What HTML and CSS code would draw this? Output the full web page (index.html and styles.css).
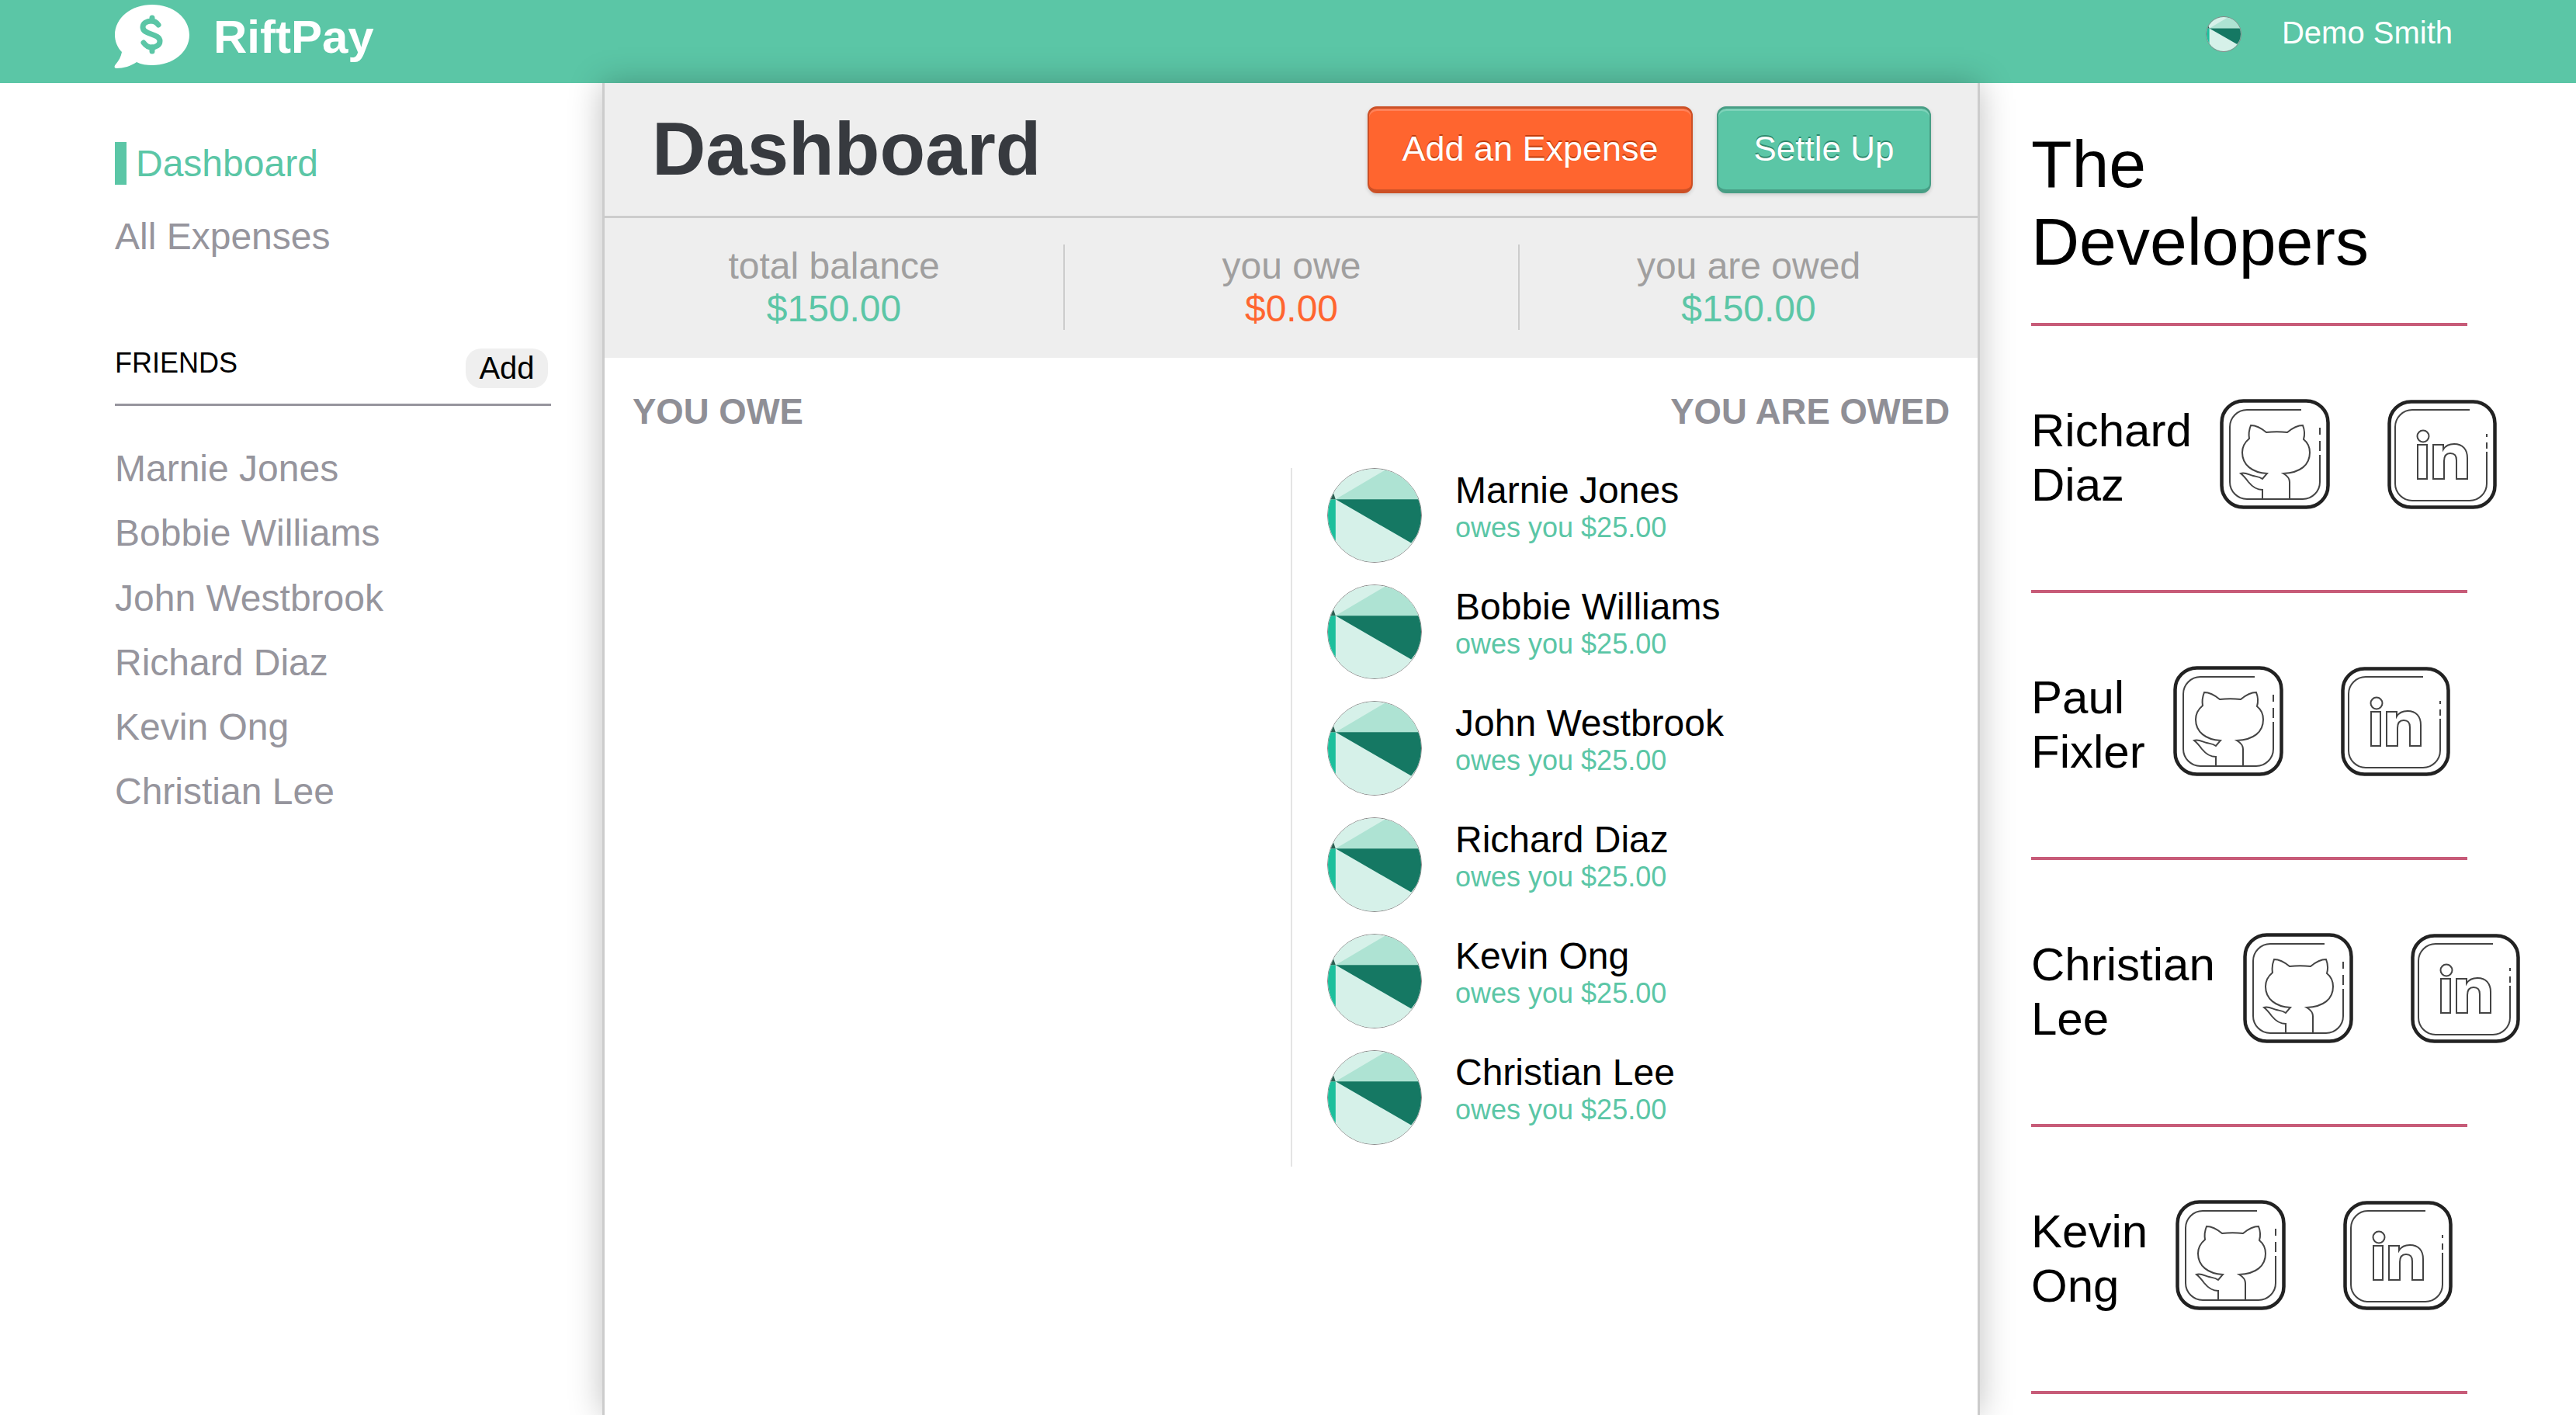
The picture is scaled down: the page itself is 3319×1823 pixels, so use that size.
FILE: index.html
```html
<!DOCTYPE html>
<html lang="en">
<head>
    <meta charset="UTF-8">
    <title>RiftPay</title>
    <link rel="stylesheet" href="styles.css">
</head>
<body>
    <svg class="defs" xmlns="http://www.w3.org/2000/svg">
        <symbol id="avatar" viewBox="0 0 122 122">
            <rect width="122" height="122" fill="#d6f1e9"/>
            <polygon points="10,40 74,2 122,0 122,40" fill="#aee3d3"/>
            <polygon points="10,40 122,40 122,80 109,97" fill="#157863"/>
            <rect x="0" y="40" width="10" height="82" fill="#1dbf9c"/>
            <polygon points="0,40 10,40 5,26 0,26" fill="#2c5f52"/>
        </symbol>
        <symbol id="github" viewBox="0 0 142 142">
            <g fill="none" stroke="#222">
                <rect x="2.5" y="2.5" width="137" height="137" rx="28" stroke-width="4.5"/>
                <g stroke="#444" stroke-width="2">
                    <path d="M105 14H35C23 14 13 24 13 36V107C13 119 23 129 35 129H107C119 129 129 119 129 107V72"/>
                    <path d="M129 54V67M129 37V46"/>
                    <path d="M55 129V117C46 117 41 112 37 107C34 103 31 99 27 96C33 94 38 98 43 99C47 100 51 100 55 103L61 96C42 95 29 85 29 69C29 62 32 56 38 51C37 45 38 39 40 34C47 34 54 38 60 43C68 42 79 42 87 43C93 38 100 34 107 34C109 39 110 45 108 52C113 56 116 62 116 69C116 85 104 95 82 96C87 99 90 102 90 107V129"/>
                </g>
            </g>
        </symbol>
        <symbol id="linkedin" viewBox="0 0 142 142">
            <g fill="none" stroke="#222">
                <rect x="2.5" y="3.5" width="136" height="136" rx="28" stroke-width="4.5"/>
                <g stroke="#444" stroke-width="2">
                    <path d="M106 14H32C20 14 10 24 10 36V109C10 121 20 131 32 131H106C118 131 128 121 128 109V68"/>
                    <path d="M128 56V64M128 45V49"/>
                    <circle cx="46" cy="48" r="7.5"/>
                    <rect x="39" y="59" width="12" height="44"/>
                    <path d="M59 59H72V65C75 60 80 58 86 58C97 58 103 65 103 76V103H89V79C89 73 87 70 81 70C75 70 73 74 73 80V103H59Z"/>
                </g>
            </g>
        </symbol>
    </svg>

    <header class="topbar">
        <div class="brand">
            <svg class="brand-logo" viewBox="0 0 98 84">
                <path fill="#fff" d="M49 1C76 1 97 18 97 40C97 62 76 79 49 79C42 79 35 78 29 75C22 80 12 83 3 83C0 83 0 80 2 78C6 73 9 68 10 62C4 56 1 48 1 40C1 18 22 1 49 1Z"/>
                <g fill="none" stroke="#5bc6a6" stroke-width="7" stroke-linecap="round">
                    <path d="M57 27C54 23 51 22 48 22C42 22 37 25 37 30C37 35 42 37 48 39C54 41 59 43 59 48C59 53 54 56 48 56C44 56 41 54 38 50"/>
                    <path d="M49 18V22M49 56V61"/>
                </g>
            </svg>
            <span class="brand-name">RiftPay</span>
        </div>
        <div class="user">
            <svg class="avatar avatar-small"><use href="#avatar"/></svg>
            <span class="user-name">Demo Smith</span>
        </div>
    </header>

    <div class="layout">
        <aside class="sidebar">
            <nav class="side-nav">
                <a class="side-link active">Dashboard</a>
                <a class="side-link">All Expenses</a>
            </nav>
            <div class="friends-head">
                <span class="friends-title">FRIENDS</span>
                <button class="add-btn">Add</button>
            </div>
            <ul class="friends">
                <li>Marnie Jones</li>
                <li>Bobbie Williams</li>
                <li>John Westbrook</li>
                <li>Richard Diaz</li>
                <li>Kevin Ong</li>
                <li>Christian Lee</li>
            </ul>
        </aside>

        <main class="main">
            <div class="dash-head">
                <h1>Dashboard</h1>
                <div class="dash-actions">
                    <button class="btn btn-orange">Add an Expense</button>
                    <button class="btn btn-green">Settle Up</button>
                </div>
            </div>
            <div class="stats">
                <div class="stat stat-total">
                    <div class="stat-label">total balance</div>
                    <div class="stat-value green">$150.00</div>
                </div>
                <div class="stat stat-owe">
                    <div class="stat-label">you owe</div>
                    <div class="stat-value orange">$0.00</div>
                </div>
                <div class="stat stat-owed">
                    <div class="stat-label">you are owed</div>
                    <div class="stat-value green">$150.00</div>
                </div>
            </div>
            <div class="balances">
                <div class="balance-titles">
                    <span>YOU OWE</span>
                    <span>YOU ARE OWED</span>
                </div>
                <div class="balance-cols">
                    <div class="owe-col"></div>
                    <div class="owed-col">
                        <div class="person">
                            <svg class="avatar"><use href="#avatar"/></svg>
                            <div><div class="person-name">Marnie Jones</div><div class="person-sub">owes you $25.00</div></div>
                        </div>
                        <div class="person">
                            <svg class="avatar"><use href="#avatar"/></svg>
                            <div><div class="person-name">Bobbie Williams</div><div class="person-sub">owes you $25.00</div></div>
                        </div>
                        <div class="person">
                            <svg class="avatar"><use href="#avatar"/></svg>
                            <div><div class="person-name">John Westbrook</div><div class="person-sub">owes you $25.00</div></div>
                        </div>
                        <div class="person">
                            <svg class="avatar"><use href="#avatar"/></svg>
                            <div><div class="person-name">Richard Diaz</div><div class="person-sub">owes you $25.00</div></div>
                        </div>
                        <div class="person">
                            <svg class="avatar"><use href="#avatar"/></svg>
                            <div><div class="person-name">Kevin Ong</div><div class="person-sub">owes you $25.00</div></div>
                        </div>
                        <div class="person">
                            <svg class="avatar"><use href="#avatar"/></svg>
                            <div><div class="person-name">Christian Lee</div><div class="person-sub">owes you $25.00</div></div>
                        </div>
                    </div>
                </div>
            </div>
        </main>

        <aside class="devs">
            <h2>The Developers</h2>
            <div class="dev">
                <span class="dev-name">Richard Diaz</span>
                <svg class="dev-icon"><use href="#github"/></svg>
                <svg class="dev-icon"><use href="#linkedin"/></svg>
            </div>
            <div class="dev">
                <span class="dev-name">Paul Fixler</span>
                <svg class="dev-icon"><use href="#github"/></svg>
                <svg class="dev-icon"><use href="#linkedin"/></svg>
            </div>
            <div class="dev">
                <span class="dev-name">Christian Lee</span>
                <svg class="dev-icon"><use href="#github"/></svg>
                <svg class="dev-icon"><use href="#linkedin"/></svg>
            </div>
            <div class="dev">
                <span class="dev-name">Kevin Ong</span>
                <svg class="dev-icon"><use href="#github"/></svg>
                <svg class="dev-icon"><use href="#linkedin"/></svg>
            </div>
        </aside>
    </div>
</body>
</html>
```

FILE: styles.css
```css
html, body {
    margin: 0;
    height: 100%;
    overflow: hidden;
}
body {
    font-family: "Liberation Sans", Arial, sans-serif;
    font-size: 48px;
    color: #000;
    background-color: #fff;
}
.defs {
    display: none;
}

/* top bar */
.topbar {
    height: 107px;
    background-color: #5bc6a6;
    display: flex;
    justify-content: space-between;
    padding: 0 159px 0 147px;
    color: #fff;
}
.brand {
    display: flex;
    gap: 30px;
}
.brand-logo {
    width: 98px;
    height: 84px;
    margin-top: 5px;
}
.brand-name {
    font-size: 60px;
    font-weight: bold;
    line-height: 96px;
}
.user {
    display: flex;
    gap: 52px;
    padding-top: 21px;
}
.user-name {
    font-size: 40px;
    line-height: 42px;
}

.avatar {
    display: block;
    flex: none;
    width: 122px;
    height: 122px;
    box-sizing: border-box;
    border: 1px solid #8a8a8a;
    border-radius: 50%;
    overflow: hidden;
}
.avatar-small {
    width: 46px;
    height: 46px;
}

.layout {
    display: flex;
    height: calc(100vh - 107px);
}

/* left column */
.sidebar {
    width: 776px;
    flex: none;
    box-sizing: border-box;
    padding: 76px 66px 0 148px;
}
.side-nav {
    display: flex;
    flex-direction: column;
    gap: 39px;
}
.side-link {
    line-height: 55px;
    color: #96959d;
}
.side-link.active {
    color: #5bc6a6;
    border-left: 15px solid #5bc6a6;
    padding-left: 12px;
}
.friends-head {
    display: flex;
    justify-content: space-between;
    margin-top: 117px;
    padding: 0 4px 20px 0;
    border-bottom: 3px solid #96959d;
    font-size: 36px;
    line-height: 38px;
}
.add-btn {
    width: 106px;
    height: 51px;
    padding: 0;
    border: 0;
    border-radius: 20px;
    background-color: #efefef;
    font: 40px "Liberation Sans", Arial, sans-serif;
    color: #000;
}
.friends {
    list-style: none;
    margin: 53px 0 0;
    padding: 0;
    color: #96959d;
}
.friends li {
    height: 83.3px;
    line-height: 55px;
}

/* middle column */
.main {
    width: 1775px;
    flex: none;
    box-sizing: border-box;
    border-left: 3px solid #ccc;
    border-right: 3px solid #ccc;
    box-shadow: 0 0 40px rgba(0, 0, 0, 0.25);
    position: relative;
    background-color: #fff;
}
.dash-head {
    height: 171px;
    box-sizing: content-box;
    background-color: #eee;
    border-bottom: 3px solid #ccc;
    display: flex;
    justify-content: space-between;
    align-items: center;
    padding: 0 60px 0 61px;
}
.dash-head h1 {
    margin: 0 0 2px;
    font-size: 96px;
    color: #373a3f;
}
.dash-actions {
    display: flex;
    gap: 31px;
}
.btn {
    height: 112px;
    box-sizing: border-box;
    border-style: solid;
    border-width: 3px 2px 5px;
    border-radius: 12px;
    padding: 0;
    font: 44px "Liberation Sans", Arial, sans-serif;
    color: #fff;
}
.btn-orange {
    width: 419px;
    font-size: 45px;
    background-color: #ff652f;
    border-color: #cc5026;
    box-shadow: inset 0 3px 0 #ff8259, 0 2px 5px rgba(0, 0, 0, 0.15);
    text-shadow: 0 -2px 0 #c23c0c;
}
.btn-green {
    width: 276px;
    background-color: #5bc6a6;
    border-color: #489e85;
    box-shadow: inset 0 3px 0 #7dd2b9, 0 2px 5px rgba(0, 0, 0, 0.15);
    text-shadow: 0 -2px 0 #2f8a6e;
}
.stats {
    height: 180px;
    box-sizing: border-box;
    background-color: #eee;
    padding-top: 34px;
    display: flex;
}
.stat {
    height: 110px;
    box-sizing: border-box;
    flex: none;
    text-align: center;
    line-height: 55px;
}
.stat-total {
    width: 591px;
}
.stat-owe {
    width: 586px;
    border-left: 2px solid #ccc;
}
.stat-owed {
    width: 592px;
    border-left: 2px solid #ccc;
}
.stat-label {
    color: #a09f9f;
}
.green {
    color: #5bc6a6;
}
.orange {
    color: #ff652f;
}
.balances {
    padding: 43px 36px 0;
}
.balance-titles {
    display: flex;
    justify-content: space-between;
    font-size: 45.5px;
    font-weight: bold;
    line-height: 54px;
    color: #8f8f96;
}
.balance-cols {
    display: flex;
    margin: 45px 0 0;
}
.owe-col {
    width: 848px;
    flex: none;
}
.owed-col {
    border-left: 2px solid #e4e4e4;
    padding-left: 45px;
}
.person {
    display: flex;
    height: 150px;
    gap: 43px;
}
.person-name {
    line-height: 55px;
    margin-top: 1px;
}
.person-sub {
    font-size: 36px;
    line-height: 41px;
    color: #5bc6a6;
}

/* right column */
.devs {
    flex: none;
    padding-left: 66px;
    width: 490px;
}
.devs h2 {
    width: 562px;
    margin: 0;
    padding: 54px 0 55px;
    border-bottom: 4px solid #c75b78;
    font-size: 86px;
    font-weight: normal;
    line-height: 100px;
}
.dev {
    width: 562px;
    height: 340px;
    border-bottom: 4px solid #c75b78;
    display: flex;
    align-items: center;
}
.dev-name {
    flex: none;
    width: min-content;
    margin-right: 36px;
    font-size: 60px;
    line-height: 70px;
}
.dev-icon {
    flex: none;
    width: 142px;
    height: 142px;
    margin: 0 74px 10px 0;
}
```
